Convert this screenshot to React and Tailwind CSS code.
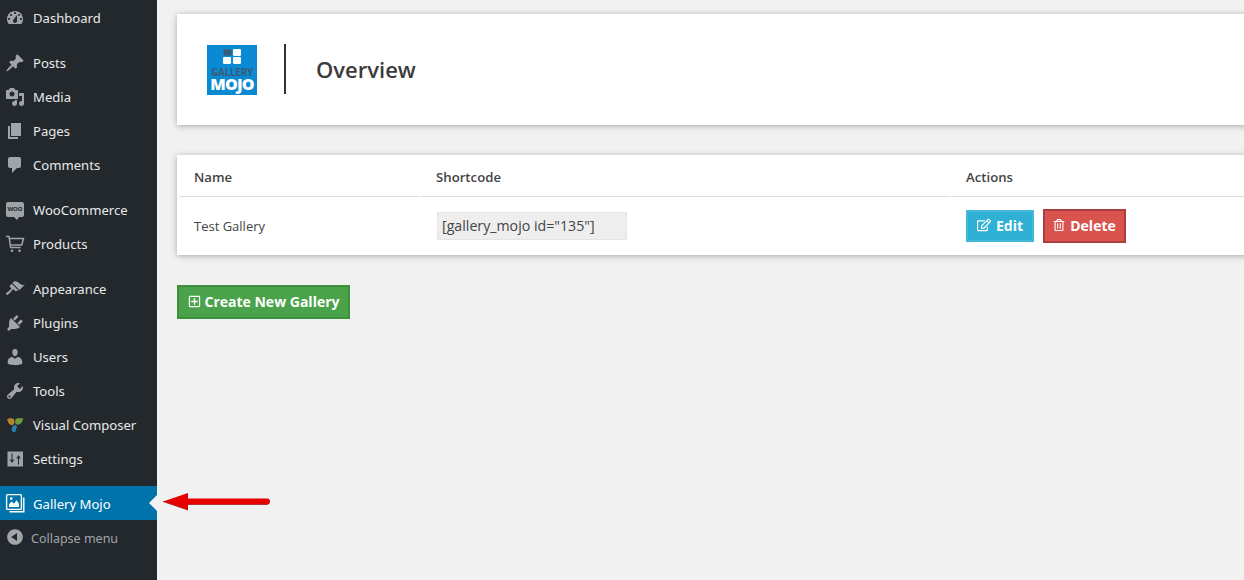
import React from "react";
import { FaRegEdit, FaRegPlusSquare, FaRegTrashAlt } from "react-icons/fa";

const icons = {
  dashboard:
    "M3.76 16h12.48c1.1-1.37 1.76-3.11 1.76-5 0-4.42-3.58-8-8-8s-8 3.58-8 8c0 1.89.66 3.63 1.76 5zM10 4c.55 0 1 .45 1 1s-.45 1-1 1-1-.45-1-1 .45-1 1-1zM6 6c.55 0 1 .45 1 1s-.45 1-1 1-1-.45-1-1 .45-1 1-1zm8 0c.55 0 1 .45 1 1s-.45 1-1 1-1-.45-1-1 .45-1 1-1zm-5.37 5.55L12 7v6c0 1.1-.9 2-2 2s-2-.9-2-2c0-.57.24-1.08.63-1.45zM4 10c.55 0 1 .45 1 1s-.45 1-1 1-1-.45-1-1 .45-1 1-1zm12 0c.55 0 1 .45 1 1s-.45 1-1 1-1-.45-1-1 .45-1 1-1z",
  post: "M10.44 3.02l1.82-1.82 6.36 6.35-1.83 1.82c-1.05-.68-2.48-.57-3.41.36l-.75.75c-.92.93-1.04 2.35-.35 3.41l-1.83 1.82-2.41-2.41-2.8 2.79c-.42.42-3.38 2.71-3.8 2.29s1.86-3.39 2.28-3.81l2.79-2.79L4.1 9.36l1.83-1.82c1.05.69 2.48.57 3.41-.36l.75-.75c.93-.92 1.05-2.35.35-3.41z",
  media:
    "M13 11V4c0-.55-.45-1-1-1h-1.67L9 1H5L3.67 3H2c-.55 0-1 .45-1 1v7c0 .55.45 1 1 1h10c.55 0 1-.45 1-1zM7 4.5c1.38 0 2.5 1.12 2.5 2.5S8.38 9.5 7 9.5 4.5 8.38 4.5 7 5.62 4.5 7 4.5zM14 6h5v10.5c0 1.38-1.12 2.5-2.5 2.5S14 17.88 14 16.5s1.12-2.5 2.5-2.5c.17 0 .34.02.5.05V9h-3V6zm-4 8.05V13h2v3.5c0 1.38-1.12 2.5-2.5 2.5S7 17.88 7 16.5 8.12 14 9.5 14c.17 0 .34.02.5.05z",
  page: "M6 15V2h10v13H6zm-1 1h8v2H3V5h2v11z",
  comments: "M5 2h9c1.1 0 2 .9 2 2v7c0 1.1-.9 2-2 2h-2l-5 5v-5H5c-1.1 0-2-.9-2-2V4c0-1.1.9-2 2-2z",
  appearance:
    "M14.48 11.06L7.41 3.99l1.5-1.5c.5-.56 2.3-.47 3.51.32 1.21.8 1.43 1.28 2.91 2.1 1.18.64 2.45 1.26 4.45.85zm-.71.71L6.7 4.7 4.93 6.47c-.39.39-.39 1.02 0 1.41l1.06 1.06c.39.39.39 1.03 0 1.42-.6.6-1.43 1.11-2.21 1.69-.35.26-.7.53-1.01.84C1.43 13.23.4 14.8 1.2 15.6c.8.8 2.37-.23 3.71-1.57.31-.31.58-.66.84-1.01.58-.78 1.09-1.61 1.69-2.21.39-.39 1.02-.39 1.41 0l1.06 1.06c.39.39 1.03.39 1.42 0z",
  plugins:
    "M13.11 4.36L9.87 7.6 8 5.73l3.24-3.24c.35-.34 1.05-.2 1.56.32.52.51.66 1.21.31 1.55zm-8 1.77l.91-1.12 9.01 9.01-1.19.84c-.71.71-2.63 1.16-3.82 1.16H6.14L4.9 17.26c-.59.59-1.54.59-2.12 0-.59-.58-.59-1.53 0-2.12l1.24-1.24v-3.88c0-1.13.4-3.19 1.09-3.89zm7.26 3.97l3.24-3.24c.34-.35 1.04-.21 1.55.31.52.51.66 1.21.31 1.55l-3.24 3.25z",
  users:
    "M10 9.25c-2.27 0-2.73-3.44-2.73-3.44C7 4.02 7.82 2 9.97 2c2.16 0 2.98 2.02 2.71 3.81 0 0-.41 3.44-2.68 3.44zm0 2.57L12.72 10c2.39 0 4.52 2.33 4.52 4.53v2.49s-3.65 1.13-7.24 1.13c-3.65 0-7.24-1.13-7.24-1.13v-2.49c0-2.25 1.94-4.48 4.47-4.48z",
  tools:
    "M16.68 9.77c-1.34 1.34-3.3 1.67-4.95.99l-5.41 6.52c-.99.99-2.59.99-3.58 0s-.99-2.59 0-3.57l6.52-5.42c-.68-1.65-.35-3.61.99-4.95 1.28-1.28 3.12-1.62 4.72-1.06l-2.89 2.89 2.82 2.82 2.86-2.87c.53 1.58.18 3.39-1.08 4.65zM3.81 16.21c.4.39 1.04.39 1.43 0 .4-.4.4-1.04 0-1.43-.39-.4-1.03-.4-1.43 0-.39.39-.39 1.03 0 1.43z",
  collapse: "M10 2.16c4.33 0 7.84 3.51 7.84 7.84s-3.51 7.84-7.84 7.84S2.16 14.33 2.16 10 5.71 2.16 10 2.16zm2 11.72V6.12L6.18 9.97z",
};

function Dashicon({ name, className = "" }) {
  return (
    <svg viewBox="0 0 20 20" className={`w-5 h-5 ${className}`} fill="currentColor">
      <path fillRule="evenodd" d={icons[name]} />
    </svg>
  );
}

function SettingsIcon() {
  return (
    <svg viewBox="0 0 20 20" className="w-5 h-5">
      <rect x="2.5" y="2.5" width="15.5" height="15" fill="#9ea3a8" />
      <path d="M7 4.5v6" stroke="#23282d" strokeWidth="1" />
      <path d="M4.8 10.5h4.4L7 14z" fill="#23282d" />
      <path d="M13.5 15.5v-6" stroke="#23282d" strokeWidth="1" />
      <path d="M11.3 9.5h4.4L13.5 6z" fill="#23282d" />
    </svg>
  );
}

function WooIcon() {
  return (
    <div className="relative w-[18px] h-[15px] bg-[#9ea3a8] rounded-[2px] flex items-center justify-center mt-[-2px]">
      <span className="text-[6px] leading-none font-bold text-[#23282d]">WOO</span>
      <span className="absolute bottom-[-3px] left-[8px] w-0 h-0 border-t-[3px] border-t-[#9ea3a8] border-l-[3px] border-l-transparent border-r-[2px] border-r-transparent" />
    </div>
  );
}

function CartIcon() {
  return (
    <svg viewBox="0 0 20 20" className="w-5 h-5 text-[#9ea3a8]" fill="none" stroke="currentColor" strokeWidth="1.5">
      <path d="M1 2.5h3l1.6 11h10" />
      <path d="M4.4 4.5H18.5L16.8 11H5.4" />
      <circle cx="7" cy="16.8" r="1.3" fill="currentColor" stroke="none" />
      <circle cx="14.5" cy="16.8" r="1.3" fill="currentColor" stroke="none" />
    </svg>
  );
}

function ComposerIcon() {
  return (
    <svg viewBox="0 0 20 20" className="w-5 h-5">
      <path d="M2 4.5l3-1.5 4 1 .5 4-2 2.5L4 9z" fill="#b7832f" />
      <path d="M10.5 4l3-1 5 .5-2 4.5-4 2-2.5-2z" fill="#6f9a3d" />
      <path d="M7.5 11.5l3-2 1.5 2-1.5 5-2.5 1-1.5-3z" fill="#2a7fb0" />
    </svg>
  );
}

function GalleryIcon() {
  return (
    <svg viewBox="0 0 20 20" className="w-5 h-5 text-white" fill="none">
      <path d="M18.8 4.5v14.3H4.5" stroke="currentColor" strokeWidth="1.4" />
      <rect x="1.6" y="1.6" width="14.8" height="14.8" rx="1" stroke="currentColor" strokeWidth="1.4" />
      <path d="M4 14v-2.5l2.5-3 2.5 2.2 2.5-3.4 2.5 3.4V14z" fill="currentColor" />
      <circle cx="6.2" cy="5.6" r="1.3" fill="currentColor" />
    </svg>
  );
}

const menuGroups = [
  [{ label: "Dashboard", icon: <Dashicon name="dashboard" /> }],
  [
    { label: "Posts", icon: <Dashicon name="post" /> },
    { label: "Media", icon: <Dashicon name="media" /> },
    { label: "Pages", icon: <Dashicon name="page" /> },
    { label: "Comments", icon: <Dashicon name="comments" /> },
  ],
  [
    { label: "WooCommerce", icon: <WooIcon /> },
    { label: "Products", icon: <CartIcon /> },
  ],
  [
    { label: "Appearance", icon: <Dashicon name="appearance" /> },
    { label: "Plugins", icon: <Dashicon name="plugins" /> },
    { label: "Users", icon: <Dashicon name="users" /> },
    { label: "Tools", icon: <Dashicon name="tools" /> },
    { label: "Visual Composer", icon: <ComposerIcon /> },
    { label: "Settings", icon: <SettingsIcon /> },
  ],
];

function Sidebar() {
  return (
    <aside className="w-[157px] shrink-0 bg-[#23282d] pt-px flex flex-col gap-[11px] font-['Noto_Sans',sans-serif] text-[13.1px]">
      {menuGroups.map((group) => (
        <ul key={group[0].label}>
          {group.map((item) => (
            <li key={item.label} className="h-[34px] flex items-center pl-[5px] text-[#e8e9ea]">
              <span className="w-5 h-5 flex items-center justify-center text-[#a0a5aa]">{item.icon}</span>
              <span className="ml-2 pt-[2px]">{item.label}</span>
            </li>
          ))}
        </ul>
      ))}
      <div className="mt-[-1px]">
        <div className="relative h-[34px] flex items-center pl-[5px] bg-[#0073aa] text-white">
          <GalleryIcon />
          <span className="ml-2 pt-[4px]">Gallery Mojo</span>
          <span className="absolute right-0 top-[9px] w-0 h-0 border-y-[8px] border-y-transparent border-r-[8px] border-r-[#f1f1f1]" />
        </div>
        <div className="h-[34px] flex items-center pl-[5px] text-[#a0a5aa] text-[12.5px]">
          <Dashicon name="collapse" />
          <span className="ml-[6px] pt-[4px]">Collapse menu</span>
        </div>
      </div>
    </aside>
  );
}

function GalleryLogo() {
  return (
    <div className="w-[50px] h-[50px] bg-[#0a8ad2] flex flex-col items-center pt-[4px] font-['Open_Sans',sans-serif]">
      <svg viewBox="0 0 18 15" className="w-[18px] h-[15px]">
        <rect x="0.5" y="0.5" width="8" height="6" rx="1" fill="#3a5a78" />
        <rect x="10" y="0" width="8" height="7" rx="1.2" fill="#fff" />
        <rect x="0" y="8" width="8" height="7" rx="1.2" fill="#fff" />
        <rect x="10" y="8" width="8" height="7" rx="1.2" fill="#fff" />
      </svg>
      <span className="text-[10px] leading-[10px] mt-[3px] font-bold tracking-[-0.3px] text-[#3a5a78]">GALLERY</span>
      <span className="text-[16px] leading-[15px] font-extrabold tracking-[-0.8px] text-white">MOJO</span>
    </div>
  );
}

function App() {
  return (
    <div className="w-[1244px] h-[580px] flex overflow-hidden bg-[#f1f1f1] font-['Open_Sans',sans-serif] text-[#444444]">
      <Sidebar />
      <main className="w-[1200px] shrink-0 pl-5 pt-[14px]">
        <section className="h-[111px] bg-white shadow-[0_1px_6px_rgba(0,0,0,0.3)] flex items-center pl-[30px]">
          <GalleryLogo />
          <div className="w-[2px] h-[50px] bg-[#333333] ml-[27px] mb-[2px]" />
          <h1 className="ml-[30px] text-[22px] font-semibold text-[#3b3b3b]">Overview</h1>
        </section>

        <section className="mt-[30px] h-[100px] bg-white shadow-[0_1px_6px_rgba(0,0,0,0.3)] pl-[2px]">
          <div className="grid grid-cols-[240px_528px_1fr] gap-x-[2px] text-[13px]">
            <div className="h-[42px] pl-[15px] pt-[4px] flex items-center font-semibold text-[13.2px] border-b border-[#dddddd]">Name</div>
            <div className="h-[42px] pl-[15px] pt-[4px] flex items-center font-semibold text-[13.2px] border-b border-[#dddddd]">Shortcode</div>
            <div className="h-[42px] pl-[15px] pt-[4px] flex items-center font-semibold text-[13.2px] border-b border-[#dddddd]">Actions</div>
            <div className="h-[58px] pl-[15px] pt-[2px] flex items-center">Test Gallery</div>
            <div className="h-[58px] pl-[16px] flex items-center">
              <div className="w-[190px] h-[28px] bg-[#eeeeee] border border-[#e4e4e4] flex items-center pl-[4px] text-[14.2px]">
                [gallery_mojo id="135"]
              </div>
            </div>
            <div className="h-[58px] pl-[15px] flex items-center gap-[9px] text-white font-bold text-[14px]">
              <button className="w-[68px] h-[32px] pb-[2px] bg-[#31b0d5] border-2 border-[#46b8da] flex items-center justify-center gap-[5px]">
                <FaRegEdit className="text-[14px]" />
                Edit
              </button>
              <button className="w-[83px] h-[34px] pb-[2px] bg-[#d9534f] border-2 border-[#ac3f3c] flex items-center justify-center gap-[5px]">
                <FaRegTrashAlt className="text-[12px]" />
                Delete
              </button>
            </div>
          </div>
        </section>

        <button className="mt-[30px] w-[173px] h-[34px] pb-[2px] bg-[#4aa34a] border-2 border-[#3f8f3f] flex items-center justify-center gap-[4px] text-white font-bold text-[14px]">
          <FaRegPlusSquare className="text-[13px]" />
          Create New Gallery
        </button>
      </main>
      {/* annotation arrow drawn over the screenshot */}
      <svg viewBox="0 0 107 20" className="absolute left-[163px] top-[492px] w-[107px] h-[20px]">
        <path d="M0 9.5L25 1v17z" fill="#e60000" />
        <path d="M25 18L0 9.5" stroke="#9c1c1c" strokeWidth="0.8" />
        <path d="M25 6.5h79a3 3 0 0 1 0 6H25z" fill="#e60000" />
        <path d="M25 12.5h80" stroke="#a82020" strokeWidth="0.8" />
      </svg>
    </div>
  );
}

export default App;
